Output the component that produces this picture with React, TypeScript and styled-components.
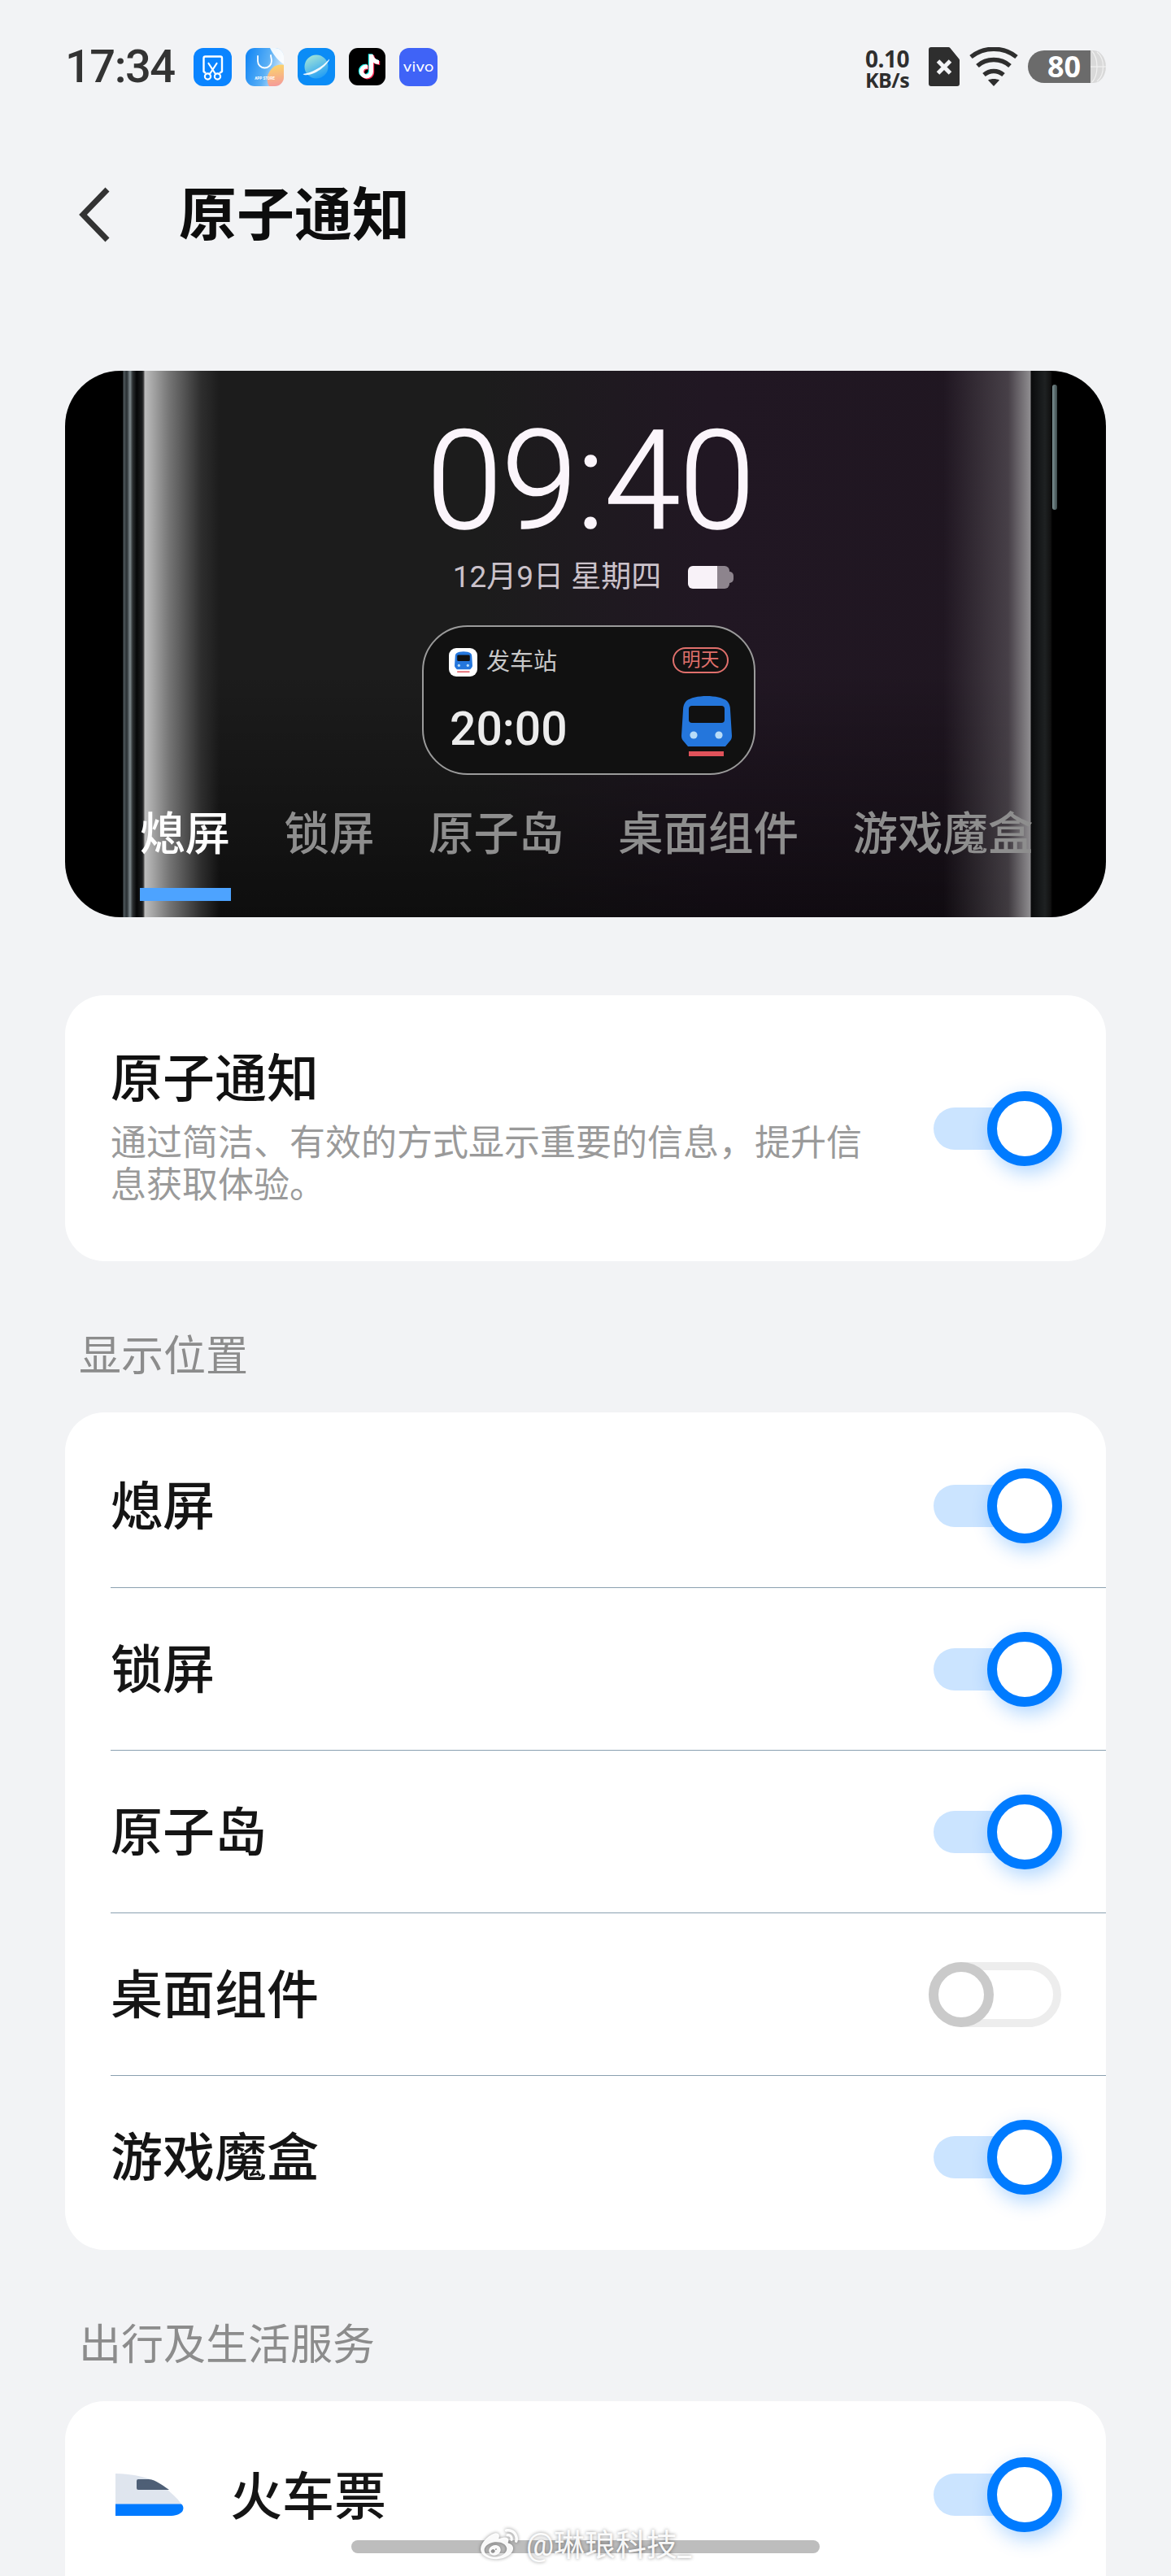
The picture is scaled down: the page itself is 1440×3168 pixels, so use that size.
import React from "react";
import styled, { createGlobalStyle } from "styled-components";
import { FaWeibo } from "react-icons/fa";

const FONT = `Roboto, "Noto Sans CJK SC", sans-serif`;

const GlobalStyle = createGlobalStyle`
  html, body {
    margin: 0;
    padding: 0;
    background: #f2f3f5;
    font-family: ${FONT};
  }
  * {
    box-sizing: border-box;
  }
`;

const AppIconShot = () => (
  <svg width="47" height="47" viewBox="0 0 47 47">
    <rect width="47" height="47" rx="12" fill="#0a84ff" />
    <path d="M15 31 L12.5 29 V12.5 a2 2 0 0 1 2 -2 H33 a2 2 0 0 1 2 2 V29 L32 31" fill="none" stroke="#fff" strokeWidth="2.4" strokeLinejoin="round" />
    <path d="M18.5 19 L27 32 M28.5 19 L20 32" stroke="#fff" strokeWidth="2.2" strokeLinecap="round" />
    <circle cx="17.5" cy="35" r="3.6" fill="none" stroke="#fff" strokeWidth="2.2" />
    <circle cx="29.5" cy="35" r="3.6" fill="none" stroke="#fff" strokeWidth="2.2" />
  </svg>
);

const AppIconStore = () => (
  <svg width="47" height="47" viewBox="0 0 47 47">
    <defs>
      <linearGradient id="storeBase" x1="0" y1="0.3" x2="1" y2="0.6">
        <stop offset="0" stopColor="#1688f5" />
        <stop offset="0.55" stopColor="#5bb0f5" />
        <stop offset="1" stopColor="#e8f2fb" />
      </linearGradient>
      <linearGradient id="storeWarm" x1="0.5" y1="0" x2="0.6" y2="1">
        <stop offset="0" stopColor="#fbd56a" />
        <stop offset="1" stopColor="#f59a9a" />
      </linearGradient>
      <clipPath id="storeClip">
        <rect width="47" height="47" rx="11" />
      </clipPath>
    </defs>
    <g clipPath="url(#storeClip)">
      <rect width="47" height="47" fill="url(#storeBase)" />
      <path d="M47 0 H30 C34 8 40 16 47 20 Z" fill="#fff" opacity="0.9" />
      <path d="M47 21 C38 19 31 24 27 34 C26 40 27 44 29 47 H47 Z" fill="url(#storeWarm)" />
      <path d="M15 10 V16 a8.5 8.5 0 0 0 17 0 C32 13 31 11 31 9" fill="none" stroke="#fff" strokeWidth="1.8" strokeLinecap="round" />
      <text x="23.5" y="39" fontSize="4.6" fontWeight="700" fill="#fff" textAnchor="middle" fontFamily="Roboto, sans-serif">APP STORE</text>
    </g>
  </svg>
);

const AppIconBrowser = () => (
  <svg width="46" height="46" viewBox="0 0 46 46">
    <defs>
      <linearGradient id="planet" x1="0.2" y1="0" x2="0.7" y2="1">
        <stop offset="0" stopColor="#a6e6d8" />
        <stop offset="1" stopColor="#1f9cf5" />
      </linearGradient>
    </defs>
    <rect width="46" height="46" rx="12" fill="#0b8cf6" />
    <circle cx="23" cy="23" r="14.5" fill="url(#planet)" />
    <path d="M6.5 32 C16 31 30 24 39 13.5 C40 16 30 27 20 31 C14 33.5 8 34 6.5 32 Z" fill="#fff" opacity="0.92" />
  </svg>
);

const NOTE_PATH = "M25 8 h5 c0.5 4 3 6.5 7 7 v5 c-2.6 0 -5 -0.8 -7 -2.2 V29 a8.5 8.5 0 1 1 -8.5 -8.5 c0.6 0 1 0 1.5 0.1 v5.2 a3.5 3.5 0 1 0 2 3.2 Z";

const AppIconTiktok = () => (
  <svg width="45" height="46" viewBox="0 0 45 46">
    <rect width="45" height="46" rx="11" fill="#000" />
    <path d={NOTE_PATH} fill="#25f4ee" transform="translate(-1.2 -0.8)" />
    <path d={NOTE_PATH} fill="#fe2c55" transform="translate(1.2 0.9)" />
    <path d={NOTE_PATH} fill="#fff" />
  </svg>
);

const AppIconVivo = () => (
  <svg width="47" height="47" viewBox="0 0 47 47">
    <rect width="47" height="47" rx="12" fill="#3f63f7" />
    <text x="4.5" y="28.5" fontSize="16" fill="#fff" fontFamily="Inter, sans-serif" textLength="38" lengthAdjust="spacingAndGlyphs">vivo</text>
  </svg>
);

const SimIcon = () => (
  <svg width="38" height="48" viewBox="0 0 38 48">
    <path d="M3 0 H24 a3 3 0 0 1 2.4 1 L37 14 a3 3 0 0 1 1 2.4 V45 a3 3 0 0 1 -3 3 H3 a3 3 0 0 1 -3 -3 V3 a3 3 0 0 1 3 -3 Z" fill="#2e2e2e" />
    <path d="M11.5 17 L26.5 32 M26.5 17 L11.5 32" stroke="#f2f3f5" strokeWidth="5" strokeLinecap="butt" />
  </svg>
);

const WifiIcon = () => (
  <svg width="60" height="48" viewBox="0 0 60 48">
    <g fill="none" stroke="#2e2e2e" strokeWidth="5.4">
      <path d="M2 12 C18 -1 42 -1 58 12" />
      <path d="M10 23 C21 13 39 13 50 23" />
      <path d="M18 34 C25 28 35 28 42 34" />
    </g>
    <path d="M23 40.5 C27 38.5 33 38.5 37 40.5 L30 48 Z" fill="#2e2e2e" />
  </svg>
);

const BatteryEnd = () => (
  <svg width="19" height="40" viewBox="0 0 19 40">
    <path d="M0 0 H4 C12 0 19 9 19 20 C19 31 12 40 4 40 H0 Z" fill="#d9d9d9" />
    <g fill="none" stroke="#f0f0f0" strokeWidth="1.2">
      <path d="M0 20 H19" />
      <path d="M2 1 C10 10 10 30 2 39" />
      <path d="M8 2 C18 10 18 30 8 38" />
    </g>
  </svg>
);

const BackIcon = () => (
  <svg width="38" height="68" viewBox="0 0 38 68">
    <path d="M35 3 L5 34 L35 65" fill="none" stroke="#333" strokeWidth="7" />
  </svg>
);

const TrainFront = ({ size }: { size: number }) => (
  <svg width={size} height={(size * 76) / 62} viewBox="0 0 62 76">
    <path d="M6 7 C16 -1 46 -1 56 7 C59 10 60 14 60 18 L62 50 C62 53 61 55 59 57 L54 63 H8 L3 57 C1 55 0 53 0 50 L2 18 C2 14 3 10 6 7 Z" fill="#2476dc" />
    <rect x="9" y="13" width="44" height="21" rx="4" fill="#111" />
    <circle cx="15" cy="49" r="4.6" fill="#b8dcf8" />
    <circle cx="46" cy="49" r="4.6" fill="#b8dcf8" />
    <rect x="9" y="69" width="43" height="6" fill="#e0525a" />
  </svg>
);

const TrainSide = () => (
  <svg width="84" height="52" viewBox="0 0 84 52">
    <path d="M0 0 C28 1 50 6 64 20 C72 27 78 32 81 38 H0 Z" fill="#dfe5ee" />
    <path d="M0 37.5 H81 C84 40 84 44 82 47 C79 50 74 52 66 52 H0 Z" fill="#007aff" />
    <path d="M26 9 a2 2 0 0 1 2 -2 H41 C50 8 57 14 66 20 H28 a2 2 0 0 1 -2 -2 Z" fill="#4e5f76" />
  </svg>
);

const Toggle = ({ on = true }: { on?: boolean }) => (
  <ToggleBox>
    <ToggleTrack $on={on} />
    <ToggleKnob $on={on} />
  </ToggleBox>
);

const SettingRow = ({ label, on = true }: { label: string; on?: boolean }) => (
  <Row>
    <RowLabel>{label}</RowLabel>
    <Toggle on={on} />
  </Row>
);

const TABS = ["熄屏", "锁屏", "原子岛", "桌面组件", "游戏魔盒"];

const App: React.FC = () => (
  <Page>
    <GlobalStyle />
    <StatusBar>
      <StatusLeft>
        <Time>17:34</Time>
        <AppIcons>
          <AppIconShot />
          <AppIconStore />
          <AppIconBrowser />
          <AppIconTiktok />
          <AppIconVivo />
        </AppIcons>
      </StatusLeft>
      <StatusRight>
        <NetSpeed>
          <NetValue>0.10</NetValue>
          <NetUnit>KB/s</NetUnit>
        </NetSpeed>
        <SimIcon />
        <WifiIcon />
        <Battery>
          <BatteryLevel>80</BatteryLevel>
          <BatteryEnd />
        </Battery>
      </StatusRight>
    </StatusBar>

    <Header>
      <BackIcon />
      <Title>原子通知</Title>
    </Header>

    <Preview>
      <SideButton />
      <Clock>09:40</Clock>
      <DateRow>
        <span>12月9日 星期四</span>
        <ChargeBattery />
      </DateRow>
      <Widget>
        <WidgetTop>
          <WidgetApp>
            <WidgetAppIcon>
              <TrainFront size={22} />
            </WidgetAppIcon>
            <span>发车站</span>
          </WidgetApp>
          <DayPill>明天</DayPill>
        </WidgetTop>
        <WidgetBottom>
          <WidgetTime>20:00</WidgetTime>
          <TrainFront size={62} />
        </WidgetBottom>
      </Widget>
      <Tabs>
        {TABS.map((tab, index) => (
          <Tab key={tab} $active={index === 0}>
            {tab}
          </Tab>
        ))}
      </Tabs>
    </Preview>

    <IntroCard>
      <IntroText>
        <IntroTitle>原子通知</IntroTitle>
        <IntroDesc>通过简洁、有效的方式显示重要的信息，提升信息获取体验。</IntroDesc>
      </IntroText>
      <Toggle />
    </IntroCard>

    <SectionLabel>显示位置</SectionLabel>
    <Card>
      <SettingRow label="熄屏" />
      <SettingRow label="锁屏" />
      <SettingRow label="原子岛" />
      <SettingRow label="桌面组件" on={false} />
      <SettingRow label="游戏魔盒" />
    </Card>

    <SectionLabel>出行及生活服务</SectionLabel>
    <Card>
      <Row>
        <ServiceName>
          <TrainSide />
          <TicketLabel>火车票</TicketLabel>
        </ServiceName>
        <Toggle />
      </Row>
    </Card>

    <HomeBar />
    <Watermark>
      <FaWeibo />
      <span>@琳琅科技_</span>
    </Watermark>
  </Page>
);

const Page = styled.div`
  position: relative;
  height: 3168px;
  overflow: hidden;
  padding: 58px 80px 0;
  background: #f2f3f5;
`;

const StatusBar = styled.div`
  display: flex;
  justify-content: space-between;
  align-items: flex-start;
  height: 48px;
`;
const StatusLeft = styled.div`
  display: flex;
  align-items: center;
`;
const Time = styled.div`
  width: 158px;
  font-size: 56px;
  font-weight: 500;
  line-height: 48px;
  color: #333;
  letter-spacing: -1.5px;
`;
const AppIcons = styled.div`
  display: flex;
  align-items: center;
  gap: 17px;
`;
const StatusRight = styled.div`
  display: flex;
  align-items: flex-start;
  gap: 12px;
`;
const NetSpeed = styled.div`
  display: flex;
  flex-direction: column;
  align-items: center;
  width: 58px;
  margin-right: 10px;
  font-family: "Open Sans", sans-serif;
  font-weight: 700;
  color: #2e2e2e;
`;
const NetValue = styled.div`
  font-size: 28px;
  line-height: 28px;
  letter-spacing: -0.5px;
`;
const NetUnit = styled.div`
  font-size: 25px;
  line-height: 24px;
  letter-spacing: -0.5px;
`;
const Battery = styled.div`
  display: flex;
  width: 96px;
  height: 40px;
  margin-top: 4px;
`;
const BatteryLevel = styled.div`
  width: 77px;
  padding-left: 12px;
  border-radius: 20px 0 0 20px;
  background: #6b6b6b;
  color: #fff;
  font-family: "Open Sans", sans-serif;
  font-size: 36px;
  font-weight: 700;
  line-height: 40px;
  text-align: center;
`;

const Header = styled.div`
  display: flex;
  align-items: center;
  gap: 85px;
  height: 80px;
  margin-top: 118px;
  padding-left: 17px;
`;
const Title = styled.h1`
  margin: 0;
  padding-top: 2px;
  font-size: 71px;
  font-weight: 700;
  line-height: 80px;
  color: #0d0d0d;
`;

const Preview = styled.div`
  position: relative;
  display: flex;
  flex-direction: column;
  align-items: center;
  height: 672px;
  margin-top: 152px;
  padding: 52px 0 0 12px;
  overflow: hidden;
  border-radius: 68px;
  background:
    linear-gradient(
      90deg,
      #000 0,
      #000 71px,
      #4f585c 72px,
      #2a3033 76px,
      #7f8a8e 80px,
      #2b2f31 83px,
      #050607 88px,
      #1b1d1e 95px,
      #555 97px,
      #bdbdbd 98px,
      #777 127px,
      #2e2e2e 167px,
      rgba(30, 30, 30, 0) 190px,
      rgba(30, 30, 30, 0) 1080px,
      rgba(110, 105, 110, 0.5) 1160px,
      #8f8d90 1187px,
      #0a0b0c 1188px,
      #1e2122 1205px,
      #111 1212px,
      #000 1214px,
      #000 100%
    ),
    linear-gradient(180deg, rgba(0, 0, 0, 0) 55%, rgba(0, 0, 0, 0.5) 100%),
    linear-gradient(90deg, #1c1c1c 0, #1c1c1c 40%, #211723 62%, #1f1620 100%);
`;
const SideButton = styled.div`
  position: absolute;
  top: 17px;
  right: 60px;
  width: 6px;
  height: 154px;
  border-radius: 3px;
  background: linear-gradient(90deg, #7d9294, #3c4a4c);
`;
const Clock = styled.div`
  height: 168px;
  font-family: Roboto, sans-serif;
  font-size: 168px;
  font-weight: 300;
  line-height: 168px;
  letter-spacing: -1px;
  -webkit-text-stroke: 1.5px #fbf5fb;
  color: #fbf5fb;
`;
const DateRow = styled.div`
  display: flex;
  align-items: center;
  gap: 33px;
  height: 40px;
  margin: 14px 0 0 7px;
  font-size: 37px;
  line-height: 40px;
  color: #cbc2ca;
`;
const ChargeBattery = styled.div`
  position: relative;
  width: 51px;
  height: 28px;
  margin-right: 5px;
  border-radius: 6px;
  background: linear-gradient(90deg, #f8f2f8 70%, #8d848d 70%);
  &::after {
    content: "";
    position: absolute;
    right: -5px;
    top: 7px;
    width: 5px;
    height: 14px;
    border-radius: 0 7px 7px 0;
    background: #8d848d;
  }
`;

const Widget = styled.div`
  display: flex;
  flex-direction: column;
  width: 410px;
  height: 184px;
  margin: 39px 4px 0 0;
  padding: 25px 31px 20px 31px;
  border: 2.5px solid #9b9b9b;
  border-radius: 56px;
  background: #111;
`;
const WidgetTop = styled.div`
  display: flex;
  justify-content: space-between;
  align-items: flex-start;
  height: 36px;
`;
const WidgetApp = styled.div`
  display: flex;
  align-items: center;
  gap: 11px;
  font-size: 29px;
  line-height: 36px;
  color: #c8c8c8;
`;
const WidgetAppIcon = styled.div`
  display: flex;
  align-items: center;
  justify-content: center;
  width: 35px;
  height: 35px;
  border-radius: 9px;
  background: #fff;
`;
const DayPill = styled.div`
  width: 69px;
  height: 32px;
  border: 2px solid #e0706c;
  border-radius: 16px;
  color: #e0706c;
  font-size: 23px;
  line-height: 27px;
  text-align: center;
`;
const WidgetBottom = styled.div`
  display: flex;
  justify-content: space-between;
  align-items: flex-start;
  margin: 23px -4px 0 0;
`;
const WidgetTime = styled.div`
  margin: 12px 0 0 1px;
  font-size: 57px;
  font-weight: 500;
  line-height: 60px;
  color: #ececec;
`;

const Tabs = styled.div`
  display: flex;
  gap: 66.5px;
  align-self: flex-start;
  margin: 38px 0 0 80px;
`;
const Tab = styled.div<{ $active: boolean }>`
  position: relative;
  height: 117px;
  font-size: 55.5px;
  font-weight: 500;
  line-height: 72px;
  white-space: nowrap;
  color: ${({ $active }) => ($active ? "#fff" : "#8e8e8e")};
  &::after {
    content: "";
    display: ${({ $active }) => ($active ? "block" : "none")};
    position: absolute;
    left: 0;
    bottom: 0;
    width: 112px;
    height: 16px;
    background: #4da3ff;
  }
`;

const IntroCard = styled.div`
  display: flex;
  align-items: center;
  justify-content: space-between;
  height: 327px;
  margin-top: 96px;
  padding: 0 54px 0 56px;
  border-radius: 48px;
  background: #fff;
`;
const IntroText = styled.div`
  width: 930px;
  margin-bottom: 4px;
`;
const IntroTitle = styled.div`
  font-size: 64px;
  font-weight: 500;
  line-height: 80px;
  color: #111;
`;
const IntroDesc = styled.div`
  margin-top: 12px;
  font-size: 44px;
  line-height: 52px;
  color: #9a9a9a;
`;

const SectionLabel = styled.div`
  height: 60px;
  margin: 88px 0 38px 17px;
  font-size: 52px;
  line-height: 60px;
  color: #8c8c8c;
`;

const Card = styled.div`
  min-height: 300px;
  padding: 15px 0;
  border-radius: 48px;
  background: #fff;
`;
const Row = styled.div`
  display: flex;
  align-items: center;
  justify-content: space-between;
  height: 200px;
  margin-left: 56px;
  padding-right: 54px;
  & + & {
    border-top: 1px solid #8aa0b0;
  }
`;
const RowLabel = styled.div`
  padding-top: 4px;
  font-size: 64px;
  font-weight: 500;
  line-height: 80px;
  color: #151515;
`;
const TicketLabel = styled(RowLabel)`
  padding-top: 8px;
`;
const ServiceName = styled.div`
  display: flex;
  align-items: center;
  gap: 57px;
  padding-left: 6px;
`;

const ToggleBox = styled.div`
  position: relative;
  flex: none;
  width: 164px;
  height: 92px;
`;
const ToggleTrack = styled.div<{ $on: boolean }>`
  position: absolute;
  border-radius: 40px;
  ${({ $on }) =>
    $on
      ? `
    left: 6px;
    top: 20px;
    width: 140px;
    height: 52px;
    background: #cbe4ff;
  `
      : `
    left: 0;
    top: 6px;
    width: 163px;
    height: 80px;
    border: 10px solid #ededed;
    background: #fff;
  `}
`;
const ToggleKnob = styled.div<{ $on: boolean }>`
  position: absolute;
  border-radius: 50%;
  background: #fff;
  ${({ $on }) =>
    $on
      ? `
    right: 0;
    top: 0;
    width: 92px;
    height: 92px;
    border: 12px solid #007bff;
    box-shadow: 5px 8px 24px rgba(0, 123, 255, 0.32);
  `
      : `
    left: 0;
    top: 6px;
    width: 80px;
    height: 80px;
    border: 12px solid #cacaca;
  `}
`;

const HomeBar = styled.div`
  position: absolute;
  left: 432px;
  top: 3124px;
  width: 576px;
  height: 16px;
  border-radius: 8px;
  background: #bdbdbd;
`;
const Watermark = styled.div`
  position: absolute;
  left: 587px;
  top: 3106px;
  display: flex;
  align-items: center;
  gap: 6px;
  color: rgba(255, 255, 255, 0.95);
  font-size: 38px;
  line-height: 48px;
  text-shadow: 0 0 4px rgba(0, 0, 0, 0.45);
  svg {
    width: 54px;
    height: 46px;
    filter: drop-shadow(0 0 2px rgba(0, 0, 0, 0.45));
  }
`;

export default App;
